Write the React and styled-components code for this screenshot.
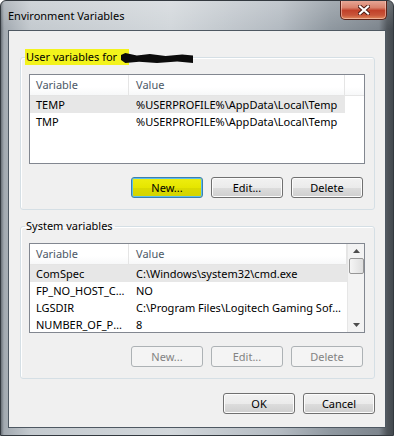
import styled, { createGlobalStyle } from "styled-components";

const GlobalStyle = createGlobalStyle`
  html, body {
    margin: 0;
    padding: 0;
    background: #ffffff;
  }
  body {
    font-family: "Noto Sans", "Open Sans", sans-serif;
    font-size: 11px;
  }
`;

const userRows = [
  { name: "TEMP", value: "%USERPROFILE%\\AppData\\Local\\Temp", selected: true },
  { name: "TMP", value: "%USERPROFILE%\\AppData\\Local\\Temp" },
];

const systemRows = [
  { name: "ComSpec", value: "C:\\Windows\\system32\\cmd.exe", selected: true },
  { name: "FP_NO_HOST_CHECK", value: "NO" },
  { name: "LGSDIR", value: "C:\\Program Files\\Logitech Gaming Software\\Resources" },
  { name: "NUMBER_OF_PROCESSORS", value: "8" },
];

function CloseGlyph() {
  return (
    <svg width="12" height="10" viewBox="0 0 12 10">
      <path
        d="M2 1.5 L10 8.5 M10 1.5 L2 8.5"
        stroke="#4a1a12"
        strokeWidth="4"
        strokeLinecap="square"
      />
      <path
        d="M2 1.5 L10 8.5 M10 1.5 L2 8.5"
        stroke="#ffffff"
        strokeWidth="2.2"
        strokeLinecap="square"
      />
    </svg>
  );
}

function VarList({ rows, scroll }) {
  return (
    <ListBox>
      <ListBody>
        <HeaderRow>
          <HeadCell $first>Variable</HeadCell>
          <HeadCell $grow={scroll}>Value</HeadCell>
          {!scroll && <HeadFill />}
        </HeaderRow>
        {rows.map((r) => (
          <Row key={r.name} $selected={r.selected} $full={scroll}>
            <Cell $first>{r.name}</Cell>
            <Cell $grow>{r.value}</Cell>
          </Row>
        ))}
      </ListBody>
      {scroll && (
        <ScrollBar>
          <Arrow>
            <svg width="7" height="4" viewBox="0 0 7 4">
              <path d="M0 4 L3.5 0 L7 4 Z" fill="#4d4d4d" />
            </svg>
          </Arrow>
          <Thumb />
          <Track />
          <Arrow>
            <svg width="7" height="4" viewBox="0 0 7 4">
              <path d="M0 0 L3.5 4 L7 0 Z" fill="#4d4d4d" />
            </svg>
          </Arrow>
        </ScrollBar>
      )}
    </ListBox>
  );
}

export default function App() {
  return (
    <>
      <GlobalStyle />
      <Window>
        <TitleBar>
          <Title>Environment Variables</Title>
          <CloseButton>
            <CloseGlyph />
          </CloseButton>
        </TitleBar>
        <Client>
          <Group>
            <Legend $mark>
              User variables for <Redacted />
            </Legend>
            <VarList rows={userRows} />
            <ButtonRow>
              <Button $focus>New...</Button>
              <Button>Edit...</Button>
              <Button>Delete</Button>
            </ButtonRow>
          </Group>
          <Group $spaced>
            <Legend>System variables</Legend>
            <VarList rows={systemRows} scroll />
            <ButtonRow>
              <Button disabled>New...</Button>
              <Button disabled>Edit...</Button>
              <Button disabled>Delete</Button>
            </ButtonRow>
          </Group>
          <DialogButtons>
            <Button>OK</Button>
            <Button>Cancel</Button>
          </DialogButtons>
        </Client>
      </Window>
    </>
  );
}

const Window = styled.div`
  width: 394px;
  height: 436px;
  box-sizing: border-box;
  display: flex;
  flex-direction: column;
  border: 1px solid #33393f;
  border-radius: 6px 6px 0 0;
  overflow: hidden;
  background: linear-gradient(
      to bottom,
      rgba(255, 255, 255, 0.2) 0px,
      rgba(255, 255, 255, 0) 28px
    ),
    linear-gradient(
      to right,
      #6a7178 0px,
      #a2a9b0 3px,
      #c4cacf 30px,
      #d2d7db 170px,
      #b3bac1 280px,
      #8f98a0 330px,
      #7e868e 378px,
      #50565c 386px,
      #3f454b 394px
    );
`;

const TitleBar = styled.div`
  height: 29px;
  display: flex;
  align-items: flex-start;
  justify-content: space-between;
  padding-left: 7px;
`;

const Title = styled.div`
  margin-top: 7px;
  color: #000000;
  font-size: 11px;
  line-height: 15px;
`;

const CloseButton = styled.div`
  margin-top: -1px;
  margin-right: 6px;
  width: 47px;
  height: 20px;
  box-sizing: border-box;
  display: flex;
  align-items: center;
  justify-content: center;
  border: 1px solid #5c2218;
  border-top: none;
  border-radius: 0 0 5px 5px;
  background: linear-gradient(
    to bottom,
    #e8ab9b 0%,
    #d9826c 40%,
    #c1412a 55%,
    #c8553a 80%,
    #e08a5c 100%
  );
  box-shadow: inset 0 0 0 1px rgba(255, 220, 210, 0.5);
`;

const Client = styled.div`
  flex: 1;
  margin: 0 7px 7px 7px;
  border: 1px solid #4e5862;
  background: #f0f0f0;
  padding: 18px 10px 0 11px;
  display: flex;
  flex-direction: column;
`;

const Group = styled.fieldset`
  margin: ${(p) => (p.$spaced ? "8px" : "0")} 0 0 0;
  padding: 9px 9px 11px 8px;
  border: 1px solid #d5dfe5;
  border-radius: 3px;
  box-shadow: inset 1px 1px 0 #ffffff;
  min-width: 0;
`;

const Legend = styled.legend`
  margin-left: -4px;
  padding: 0 2px 0 1px;
  height: 16px;
  line-height: 16px;
  font-size: 11px;
  color: #000000;
  background: ${(p) => (p.$mark ? "#f3f31c" : "transparent")};
  white-space: nowrap;
`;

/* black scribble that hides the user name; it runs past the yellow mark */
const Redacted = styled.span`
  display: inline-block;
  width: 72px;
  height: 10px;
  vertical-align: -2px;
  margin-left: 1px;
  margin-right: -66px;
  background: #0b0b0b;
  clip-path: polygon(
    0 20%,
    6% 0,
    22% 25%,
    40% 10%,
    62% 30%,
    85% 15%,
    100% 25%,
    100% 100%,
    78% 85%,
    50% 100%,
    25% 88%,
    6% 100%,
    0 70%
  );
`;

const ListBox = styled.div`
  height: 90px;
  box-sizing: border-box;
  border: 1px solid #828790;
  background: #ffffff;
  display: flex;
  overflow: hidden;
`;

const ListBody = styled.div`
  flex: 1;
  min-width: 0;
  display: flex;
  flex-direction: column;
`;

const HeaderRow = styled.div`
  height: 21px;
  flex: none;
  display: flex;
  background: linear-gradient(to bottom, #ffffff 0%, #ffffff 60%, #f7f8f9 100%);
  border-bottom: 1px solid #e5e5e5;
  box-sizing: border-box;
`;

const HeadCell = styled.div`
  width: ${(p) => (p.$first ? "99px" : "216px")};
  flex: ${(p) => (p.$grow ? "1" : "none")};
  box-sizing: border-box;
  padding-left: ${(p) => (p.$first ? "6px" : "7px")};
  line-height: 20px;
  color: #4c5866;
  border-right: 1px solid #e5e5e5;
  white-space: nowrap;
`;

const HeadFill = styled.div`
  flex: 1;
`;

const Row = styled.div`
  height: 17px;
  flex: none;
  display: flex;
  width: ${(p) => (p.$full ? "100%" : "315px")};
  background: ${(p) => (p.$selected ? "#e7e7e7" : "transparent")};
`;

const Cell = styled.div`
  width: 99px;
  flex: ${(p) => (p.$grow ? "1" : "none")};
  min-width: 0;
  box-sizing: border-box;
  padding-left: ${(p) => (p.$first ? "6px" : "7px")};
  padding-right: 4px;
  line-height: 17px;
  color: #000000;
  white-space: nowrap;
  overflow: hidden;
  text-overflow: ellipsis;
`;

const ScrollBar = styled.div`
  width: 17px;
  flex: none;
  display: flex;
  flex-direction: column;
  align-items: center;
  background: #f3f3f3;
  border-left: 1px solid #e6e6e6;
  box-sizing: border-box;
`;

const Arrow = styled.div`
  height: 14px;
  width: 100%;
  display: flex;
  align-items: center;
  justify-content: center;
`;

const Thumb = styled.div`
  width: 15px;
  height: 16px;
  box-sizing: border-box;
  border: 1px solid #979797;
  border-radius: 2px;
  background: linear-gradient(to right, #f5f5f5, #dedede);
`;

const Track = styled.div`
  flex: 1;
`;

const ButtonRow = styled.div`
  display: flex;
  justify-content: flex-end;
  gap: 8px;
  margin-top: 13px;
  padding-right: 2px;
`;

const DialogButtons = styled.div`
  display: flex;
  justify-content: flex-end;
  gap: 8px;
  margin-top: 14px;
  padding-right: 0;
`;

const Button = styled.button`
  width: 72px;
  height: 21px;
  padding: 0;
  font-family: "Noto Sans", "Open Sans", sans-serif;
  font-size: 11px;
  line-height: 19px;
  border-radius: 3px;
  color: #000000;
  border: 1px solid #707070;
  background: linear-gradient(to bottom, #f2f2f2 0%, #ebebeb 50%, #dddddd 51%, #cfcfcf 100%);
  box-shadow: inset 0 0 0 1px #fcfcfc;

  ${(p) =>
    p.$focus &&
    `
    border-color: #3c7fb1;
    background: linear-gradient(to bottom, #eeee10 0%, #e6e600 50%, #dada00 51%, #d4d400 100%);
    box-shadow: inset 0 0 0 1px #5ebfe8;
  `}

  &:disabled {
    color: #838383;
    border-color: #adb2b5;
    background: #f4f4f4;
    box-shadow: none;
  }
`;
